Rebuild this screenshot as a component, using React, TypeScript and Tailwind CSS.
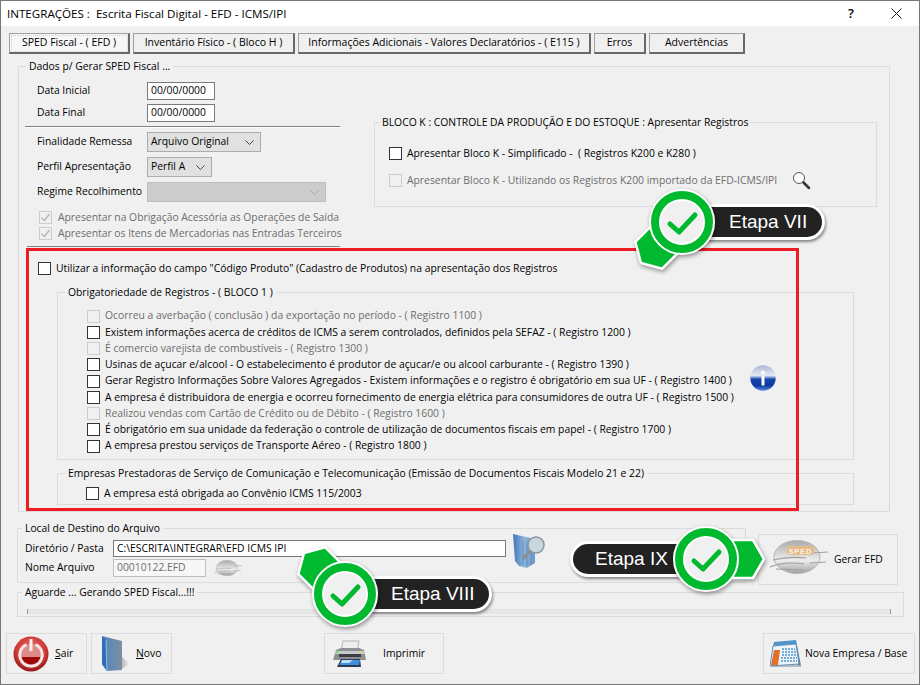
import type { ReactNode } from "react";

const registros = [
  { text: "Ocorreu a averbação ( conclusão ) da exportação no período - ( Registro 1100 )", off: true },
  { text: "Existem informações acerca de créditos de ICMS a serem controlados, definidos pela SEFAZ - ( Registro 1200 )" },
  { text: "É comercio varejista de combustíveis - ( Registro 1300 )", off: true },
  { text: "Usinas de açucar e/alcool - O estabelecimento é produtor de açucar/e ou alcool carburante - ( Registro 1390 )" },
  { text: "Gerar Registro Informações Sobre Valores Agregados - Existem informações e o registro é obrigatório em sua UF - ( Registro 1400 )" },
  { text: "A empresa é distribuidora de energia e ocorreu fornecimento de energia elétrica para consumidores de outra UF - ( Registro 1500 )" },
  { text: "Realizou vendas com Cartão de Crédito ou de Débito - ( Registro 1600 )", off: true },
  { text: "É obrigatório em sua unidade da federação o controle de utilização de documentos fiscais em papel - ( Registro 1700 )" },
  { text: "A empresa prestou serviços de Transporte Aéreo - ( Registro 1800 )" },
];

function Check({ off, checked }: { off?: boolean; checked?: boolean }) {
  return (
    <span className={`flex h-[13px] w-[13px] shrink-0 items-center justify-center border ${off ? "border-[#cccccc] bg-[#f0f0f0]" : "border-[#333333] bg-white"}`}>
      {checked && (
        <svg width="11" height="11" viewBox="0 0 11 11" fill="none">
          <path d="M1.5 5.5 4.5 8.5 9.5 2" stroke="#b4b4b4" strokeWidth="1.4" />
        </svg>
      )}
    </span>
  );
}

function Group({ title, tight, className, children }: { title: string; tight?: boolean; className: string; children: ReactNode }) {
  return (
    <fieldset className={`border border-[#dcdcdc] ${className}`}>
      <legend className={`h-4 whitespace-nowrap px-[3px] leading-4 ${tight ? "ml-[4px]" : "ml-[7px]"}`}>{title}</legend>
      {children}
    </fieldset>
  );
}

function Tab({ label, active, className }: { label: string; active?: boolean; className: string }) {
  return (
    <div className={`flex h-[21px] items-center justify-center whitespace-nowrap border-t border-l border-[#a0a0a0] border-r-2 border-b-2 border-r-[#696969] border-b-[#696969] ${active ? "bg-[#f7f7f7] outline-1 -outline-offset-3 outline-dotted outline-[#cfcfcf]" : ""} ${className}`}>
      {label}
    </div>
  );
}

function Combo({ label, disabled, className }: { label?: string; disabled?: boolean; className: string }) {
  return (
    <div className={`flex h-5 items-center justify-between border pr-[6px] pl-[3px] ${disabled ? "border-[#bfbfbf] bg-[#cccccc]" : "border-[#adadad] bg-[#e1e1e1]"} ${className}`}>
      <span>{label}</span>
      <svg width="9" height="5" viewBox="0 0 9 5" fill="none">
        <path d="M.5.5l4 4 4-4" stroke={disabled ? "#a8a8a8" : "#444444"} />
      </svg>
    </div>
  );
}

function Field({ label, children, className }: { label: string; children: ReactNode; className?: string }) {
  return (
    <div className={`flex items-center ${className ?? ""}`}>
      <span className="w-[110px] shrink-0 whitespace-nowrap">{label}</span>
      {children}
    </div>
  );
}

function ToolButton({ className, icon, children }: { className: string; icon: ReactNode; children: ReactNode }) {
  return <div className={`flex items-center border border-[#dcdcdc] ${className}`}>{icon}{children}</div>;
}

function PowerIcon() {
  return (
    <svg className="shrink-0" width="36" height="36" viewBox="0 0 36 36">
      <defs>
        <radialGradient id="pw" cx="0.5" cy="0.4" r="0.6">
          <stop offset="0" stopColor="#e97a78" />
          <stop offset="0.7" stopColor="#cf3a38" />
          <stop offset="1" stopColor="#8f1513" />
        </radialGradient>
      </defs>
      <circle cx="18" cy="18" r="17.5" fill="url(#pw)" />
      <circle cx="18" cy="18" r="10.5" fill="#dd8a88" />
      <path d="M8 21a10.5 10.5 0 0 0 20 0Z" fill="#9c0808" />
      <path d="M13.5 8.7a11.2 11.2 0 1 0 9 0" fill="none" stroke="#f2e8e8" strokeWidth="3" />
      <path d="M18 3v12" stroke="#f6f0f0" strokeWidth="3" />
    </svg>
  );
}

function FolderIcon() {
  return (
    <svg className="shrink-0" width="30" height="36" viewBox="0 0 30 36">
      <defs>
        <linearGradient id="fo" x1="0" y1="0" x2="1" y2="0">
          <stop offset="0" stopColor="#4f86bd" />
          <stop offset="1" stopColor="#7d8fa3" />
        </linearGradient>
        <linearGradient id="fsh" x1="0" y1="0" x2="1" y2="0">
          <stop offset="0" stopColor="#b4b4b4" />
          <stop offset="1" stopColor="#f0f0f0" />
        </linearGradient>
      </defs>
      <path d="M20 20 29 28 20 33Z" fill="url(#fsh)" />
      <path d="M1 0 21 5V34L6 35 1 28Z" fill="url(#fo)" />
      <path d="M1 0 5 4 6 35 1 28Z" fill="#2f6fb5" />
      <path d="M5 4 6 35" stroke="#8fc0ea" />
    </svg>
  );
}

function PrinterIcon() {
  return (
    <svg className="shrink-0" width="33" height="28" viewBox="0 0 33 28">
      <path d="M10 1H26L24 12H8Z" fill="#eeeeee" stroke="#b5b5b5" />
      <path d="M3 10 8 8H26L31 10 33 20H0Z" fill="#8c9094" />
      <path d="M2 11H32V14H1Z" fill="#c6c9cc" />
      <path d="M6 14H28V17H6Z" fill="#3c3f42" />
      <path d="M8 19H27L28 27H4Z" fill="#2d3a52" />
      <path d="M9 20H27L26 25H6Z" fill="#3d8fe0" />
      <path d="M9 20H20L16 23H8Z" fill="#bfe0f5" />
      <circle cx="4" cy="12" r="1.2" fill="#7bd860" />
      <circle cx="28" cy="12" r="1.2" fill="#f2cf4c" />
    </svg>
  );
}

function CalendarIcon() {
  return (
    <svg className="shrink-0" width="33" height="27" viewBox="0 0 33 27">
      <path d="M26 0 31 26 26 24Z" fill="#59809f" />
      <path d="M4 2 26 0 26 4 3 6Z" fill="#4f94c8" />
      <path d="M3 6 26 4 29 24 0 26Z" fill="#eef3f7" stroke="#5f92b8" />
      <path d="M4 10 10 10 8 25 1 25Z" fill="#e2702c" />
      <path d="M12 9H25M12 12H26M12 15H26M11 18H27M11 21H27" stroke="#4d99cf" strokeWidth="1.6" strokeDasharray="2 1" />
      <path d="M1 26H31" stroke="#7a8a96" />
    </svg>
  );
}

function SpedIcon({ small, className }: { small?: boolean; className?: string }) {
  const id = small ? "sp2" : "sp1";
  return (
    <svg className={`shrink-0 ${className ?? ""}`} width={small ? 28 : 58} height={small ? 16 : 34} viewBox="0 0 58 34">
      <defs>
        <linearGradient id={id} x1="0" y1="0" x2="0" y2="1">
          <stop offset="0" stopColor="#aaaaaa" />
          <stop offset="0.35" stopColor="#d2d2d2" />
          <stop offset="0.6" stopColor="#ededed" />
          <stop offset="1" stopColor="#9f9f9f" />
        </linearGradient>
      </defs>
      <ellipse cx="27" cy="17" rx="23" ry="16.5" fill={`url(#${id})`} stroke="#b5b5b5" />
      <path d="M0 27Q14 21 34 24M3 20Q18 16 36 18M42 13 58 12M40 23 56 22M6 29 34 30" stroke="#a0a0a0" strokeWidth="1.2" fill="none" />
      {!small && (
        <>
          <rect x="17" y="6" width="27" height="9" rx="3" fill="#e5b988" />
          <text x="18.5" y="13.5" fontSize="7.5" fontWeight="700" letterSpacing="0.8" fill="#fbf3e4" fontFamily="Liberation Sans, sans-serif">SPED</text>
        </>
      )}
    </svg>
  );
}

function Callout({ className, angle, label, pillClass }: { className: string; angle: number; label: string; pillClass: string }) {
  return (
    <div className={`absolute ${className}`}>
      <div className={`absolute flex h-[36px] items-center rounded-full border-[3px] border-white bg-[#222222] font-['Liberation_Sans',sans-serif] text-[19px] whitespace-nowrap text-white shadow-[1px_2px_3px_rgba(0,0,0,0.45)] ${pillClass}`}>
        {label}
      </div>
      <svg className="absolute -top-[70px] -left-[70px] drop-shadow-[1px_2px_2px_rgba(0,0,0,0.4)]" width="140" height="140" viewBox="-70 -70 140 140">
        <path transform={`rotate(${angle})`} d="M0 -19H47L58 0 47 19H0Z" fill="#00b92f" stroke="white" strokeWidth="2.5" strokeLinejoin="round" />
        <circle r="32" fill="#00b92f" stroke="white" strokeWidth="2" />
        <circle r="22" fill="#f0f0f0" stroke="white" strokeWidth="2" />
        <path d="M-12 2-3 10 13-7" fill="none" stroke="#00b92f" strokeWidth="5" strokeLinecap="round" strokeLinejoin="round" />
      </svg>
    </div>
  );
}

export default function App() {
  return (
    <div className="relative flex h-[685px] w-[920px] flex-col overflow-hidden border border-[#777777] bg-[#f0f0f0] font-['Open_Sans',sans-serif] text-[10.35px] text-black">
      <header className="flex h-[25px] shrink-0 items-center bg-white pl-[6px] text-[11.6px]">
        <span className="flex-1">INTEGRAÇÕES :&nbsp; Escrita Fiscal Digital - EFD - ICMS/IPI</span>
        <span className="mr-[37px] text-[13px] font-semibold">?</span>
        <svg className="mr-[17px]" width="11" height="11" viewBox="0 0 11 11" fill="none">
          <path d="M.5.5l10 10M10.5.5l-10 10" stroke="#222222" />
        </svg>
      </header>

      <nav className="mt-[7px] flex gap-[3px] pl-[8px] text-[10.5px]">
        <Tab label="SPED Fiscal - ( EFD )" active className="w-[121px]" />
        <Tab label="Inventário Físico - ( Bloco H )" className="w-[162px]" />
        <Tab label="Informações Adicionais - Valores Declaratórios - ( E115 )" className="w-[293px]" />
        <Tab label="Erros" className="w-[52px]" />
        <Tab label="Advertências" className="w-[96px]" />
      </nav>

      <Group title="Dados p/ Gerar SPED Fiscal ..." className="mt-[4px] ml-[17px] h-[454px] w-[872px] shrink-0">
        <div className="flex">
          <div className="w-[355px] shrink-0 pt-[8px] pl-[18px]">
            <Field label="Data Inicial">
              <div className="flex h-[18px] w-[68px] items-center border border-[#7a7a7a] bg-white pl-[3px]">00/00/0000</div>
            </Field>
            <Field label="Data Final" className="mt-1">
              <div className="flex h-[18px] w-[68px] items-center border border-[#7a7a7a] bg-white pl-[3px]">00/00/0000</div>
            </Field>
            <div className="mt-1 -ml-3 h-[2px] w-[315px] border-t border-[#808080] bg-white" />
            <Field label="Finalidade Remessa" className="mt-[4px]">
              <Combo label="Arquivo Original" className="w-[114px]" />
            </Field>
            <Field label="Perfil Apresentação" className="mt-[5px]">
              <Combo label="Perfil A" className="w-[65px]" />
            </Field>
            <Field label="Regime Recolhimento" className="mt-[5px]">
              <Combo disabled className="w-[179px]" />
            </Field>
            <div className="mt-[9px] flex h-[13px] items-center gap-[6px] pl-[2px] text-[#6d6d6d]">
              <Check off checked />
              <span className="whitespace-nowrap">Apresentar na Obrigação Acessória as Operações de Saída</span>
            </div>
            <div className="mt-[3px] flex h-[13px] items-center gap-[6px] pl-[2px] text-[#6d6d6d]">
              <Check off checked />
              <span className="whitespace-nowrap">Apresentar os Itens de Mercadorias nas Entradas Terceiros</span>
            </div>
            <div className="mt-[6px] -ml-[10px] h-px w-[313px] bg-[#808080]" />
          </div>
          <Group title="BLOCO K : CONTROLE DA PRODUÇÃO E DO ESTOQUE : Apresentar Registros" tight className="mt-[40px] h-[93px] w-[503px]">
            <div className="mt-[17px] flex h-[13px] items-center gap-[5px] pl-[14px]">
              <Check />
              <span>Apresentar Bloco K - Simplificado -&nbsp; ( Registros K200 e K280 )</span>
            </div>
            <div className="mt-[14px] flex h-[13px] items-center gap-[5px] pl-[14px] text-[#6d6d6d]">
              <Check off />
              <span className="whitespace-nowrap">Apresentar Bloco K - Utilizando os Registros K200 importado da EFD-ICMS/IPI</span>
              <svg className="ml-[10px] shrink-0" width="19" height="19" viewBox="0 0 19 19" fill="none">
                <circle cx="7" cy="7" r="5.5" fill="#ffffff" stroke="#555555" />
                <path d="M11.5 11.5 17 17" stroke="#333333" strokeWidth="2.5" strokeLinecap="round" />
              </svg>
            </div>
          </Group>
        </div>

        <div className="mt-[15px] flex h-[13px] items-center gap-[5px] pl-[19px]">
          <Check />
          <span>Utilizar a informação do campo "Código Produto" (Cadastro de Produtos) na apresentação dos Registros</span>
        </div>

        <Group title="Obrigatoriedade de Registros - ( BLOCO 1 )" className="mt-[9px] ml-[38px] h-[176px] w-[797px]">
          <div className="flex pt-[8px] pl-[29px]">
            <ul className="w-[663px] shrink-0">
              {registros.map((r) => (
                <li key={r.text} className={`flex h-[16.25px] items-center gap-[5px] whitespace-nowrap ${r.off ? "text-[#6d6d6d]" : ""}`}>
                  <Check off={r.off} />
                  <span>{r.text}</span>
                </li>
              ))}
            </ul>
            <svg className="mt-[57px] shrink-0" width="26" height="26" viewBox="0 0 26 26">
              <defs>
                <linearGradient id="inf" x1="0" y1="0" x2="0" y2="1">
                  <stop offset="0" stopColor="#aab8d4" />
                  <stop offset="0.4" stopColor="#e4eaf4" />
                  <stop offset="0.55" stopColor="#1544ad" />
                  <stop offset="0.8" stopColor="#0d3aa0" />
                  <stop offset="1" stopColor="#5f8ce0" />
                </linearGradient>
              </defs>
              <circle cx="13" cy="13" r="12.7" fill="url(#inf)" />
              <circle cx="13" cy="7.5" r="2" fill="#ffffff" />
              <path d="M11.5 11h3v9.5h-3Z" fill="#ffffff" />
            </svg>
          </div>
        </Group>

        <Group title="Empresas Prestadoras de Serviço de Comunicação e Telecomunicação (Emissão de Documentos Fiscais Modelo 21 e 22)" className="mt-[5px] ml-[38px] h-[40px] w-[797px]">
          <div className="mt-[6px] flex h-[13px] items-center gap-[5px] pl-[28px]">
            <Check />
            <span>A empresa está obrigada ao Convênio ICMS 115/2003</span>
          </div>
        </Group>
      </Group>

      <div className="mt-[8px] flex pl-[16px]">
        <Group title="Local de Destino do Arquivo" tight className="h-[63px] w-[729px] shrink-0">
          <div className="flex">
            <div className="pl-[7px]">
              <div className="mt-[4px] flex h-[17px] items-center">
                <span className="w-[88px] whitespace-nowrap">Diretório / Pasta</span>
                <div className="flex h-[17px] w-[393px] items-center border border-[#7a7a7a] bg-white pl-[3px]">C:\ESCRITA\INTEGRAR\EFD ICMS IPI</div>
              </div>
              <div className="mt-[2px] flex h-[18px] items-center">
                <span className="w-[88px] whitespace-nowrap">Nome Arquivo</span>
                <div className="flex h-[18px] w-[93px] items-center border border-[#bfbfbf] bg-[#f7f7f7] pl-[3px] text-[#6d6d6d]">00010122.EFD</div>
                <span className="ml-2"><SpedIcon small /></span>
              </div>
            </div>
            <svg className="-mt-[3px] ml-[7px] shrink-0" width="32" height="36" viewBox="0 0 32 36">
              <defs>
                <linearGradient id="fs" x1="0" y1="0" x2="1" y2="0">
                  <stop offset="0" stopColor="#3f78b8" />
                  <stop offset="0.5" stopColor="#8fb4da" />
                  <stop offset="1" stopColor="#6f97c4" />
                </linearGradient>
              </defs>
              <path d="M0 1 22 6V30L14 35 6 33 2 28Z" fill="url(#fs)" />
              <path d="M10 8V32M14 9V33M18 9V32" stroke="#5a8cc2" />
              <circle cx="23" cy="12" r="8" fill="#c8d6de" stroke="#8a959c" strokeWidth="1.5" />
              <path d="M17 18 10 26" stroke="#8d8d8d" strokeWidth="3" />
            </svg>
          </div>
        </Group>
        <ToolButton className="mt-[14px] ml-[12px] h-[51px] w-[140px] pl-[11px]" icon={<SpedIcon className="-mt-[6px]" />}>
          <span className="ml-[6px] whitespace-nowrap">Gerar EFD</span>
        </ToolButton>
      </div>

      <Group title="Aguarde ... Gerando SPED Fiscal...!!!" tight className="mt-[-1px] ml-[16px] h-[33px] w-[887px] shrink-0">
        <div className="mt-[9px] mr-[12px] ml-[9px] h-[5px] border-x border-[#9a9a9a] bg-[#e6e6e6]" />
      </Group>

      <footer className="mt-[16px] flex h-[41px] pl-[5px]">
        <ToolButton className="w-[81px] pl-[6px]" icon={<PowerIcon />}>
          <span className="ml-[6px]"><u>S</u>air</span>
        </ToolButton>
        <ToolButton className="ml-[4px] w-[81px] pl-[9px]" icon={<FolderIcon />}>
          <span className="ml-[5px]"><u>N</u>ovo</span>
        </ToolButton>
        <ToolButton className="ml-[152px] w-[120px] pl-[8px]" icon={<PrinterIcon />}>
          <span className="ml-[17px]">Imprimir</span>
        </ToolButton>
        <ToolButton className="ml-[319px] w-[152px] pl-[6px]" icon={<CalendarIcon />}>
          <span className="ml-[2px] whitespace-nowrap">Nova Empresa / Base</span>
        </ToolButton>
      </footer>

      <div className="pointer-events-none absolute top-[247px] left-[25px] h-[263px] w-[773px] border-[3px] border-[#ed1c24]" />
      <Callout className="top-[221px] left-[681px]" angle={135} label="Etapa VII" pillClass="left-[10px] -top-[18px] w-[133px] pl-[34px]" />
      <Callout className="top-[593px] left-[344px]" angle={225} label="Etapa VIII" pillClass="left-[10px] -top-[18px] w-[137px] pl-[33px]" />
      <Callout className="top-[558px] left-[705px]" angle={0} label="Etapa IX" pillClass="right-[10px] -top-[18px] w-[126px] pl-[22px]" />
    </div>
  );
}
